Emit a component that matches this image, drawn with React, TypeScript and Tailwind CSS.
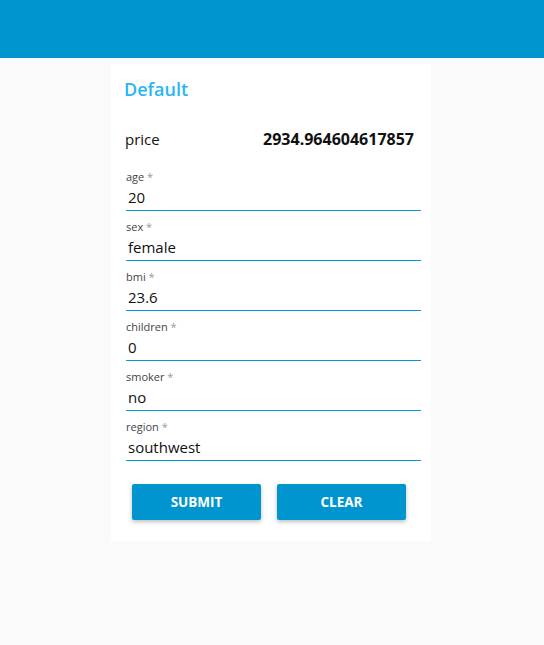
import React from "react";

const fields = [
  { label: "age", value: "20" },
  { label: "sex", value: "female" },
  { label: "bmi", value: "23.6" },
  { label: "children", value: "0" },
  { label: "smoker", value: "no" },
  { label: "region", value: "southwest" },
];

export default function App() {
  return (
    <div className="min-h-[645px] bg-[#fafafa]" style={{ fontFamily: '"Open Sans", "Noto Sans", sans-serif' }}>
      <div className="h-[58px] bg-[#0095cf]" />
      <div className="flex justify-center pt-[6px] pr-[2px]">
        <div className="w-[320px] bg-white pt-[13px] pb-[21px] pl-[15px] pr-[10px]">
          <div className="-ml-[2px] h-[24px] text-[18px] leading-[24px] font-semibold text-[#29b6f6]">Default</div>
          <div className="mt-[28px] flex h-[20px] items-center justify-between pr-[7px] text-[15px] leading-[20px] text-[#111]">
            <span className="-ml-[1px]">price</span>
            <span className="text-[16px] font-bold">2934.964604617857</span>
          </div>
          <div className="mt-[12px]">
            {fields.map((f) => (
              <div key={f.label} className="border-b border-solid border-b-[#0099d6]">
                <div className="pt-[8px] pb-[2px]">
                  <div className="h-[16px] text-[11px] leading-[16px] text-[#444]">
                    {f.label}
                    <span className="text-[#999]"> *</span>
                  </div>
                  <div className="mt-[1px] h-[22px] pl-[2px] text-[15px] leading-[22px] text-[#111]">{f.value}</div>
                </div>
              </div>
            ))}
          </div>
          <div className="mt-[23px] flex gap-[16px] pl-[6px]">
            <button className="h-[36px] w-[129px] rounded-[2px] bg-[#0095cf] text-[13.5px] font-bold text-white shadow-[0_2px_4px_rgba(0,0,0,0.25)]">
              SUBMIT
            </button>
            <button className="h-[36px] w-[129px] rounded-[2px] bg-[#0095cf] text-[13.5px] font-bold text-white shadow-[0_2px_4px_rgba(0,0,0,0.25)]">
              CLEAR
            </button>
          </div>
        </div>
      </div>
    </div>
  );
}
